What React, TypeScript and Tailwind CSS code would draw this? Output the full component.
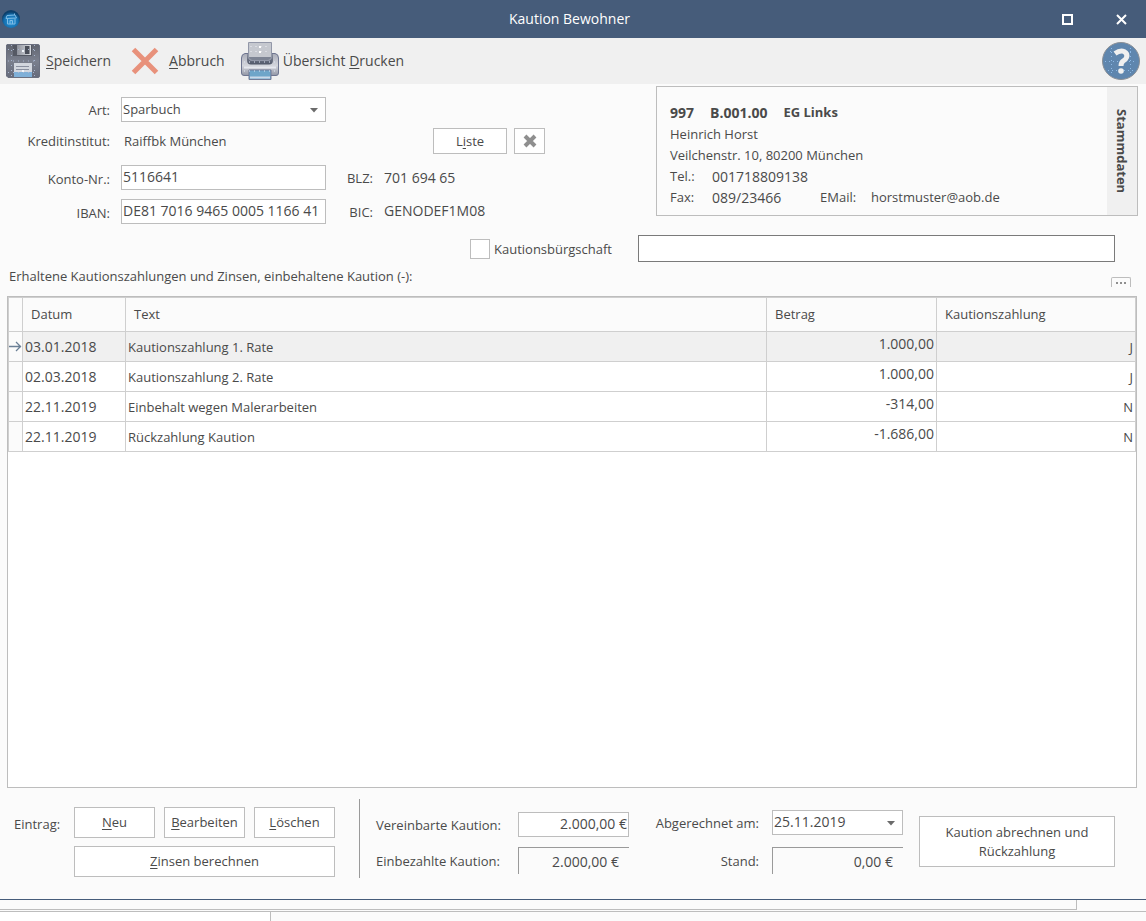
import React from "react";

const entries = [
  { date: "03.01.2018", text: "Kautionszahlung 1. Rate", amount: "1.000,00", flag: "J" },
  { date: "02.03.2018", text: "Kautionszahlung 2. Rate", amount: "1.000,00", flag: "J" },
  { date: "22.11.2019", text: "Einbehalt wegen Malerarbeiten", amount: "-314,00", flag: "N" },
  { date: "22.11.2019", text: "Rückzahlung Kaution", amount: "-1.686,00", flag: "N" },
];

const HouseIcon = () => (
  <svg width="18" height="18" viewBox="0 0 18 18" aria-hidden="true">
    <defs>
      <radialGradient id="globe" cx="0.5" cy="0.65" r="0.55">
        <stop offset="0" stopColor="#2f97d8" />
        <stop offset="0.7" stopColor="#1470b0" />
        <stop offset="1" stopColor="#0c3f6b" />
      </radialGradient>
    </defs>
    <circle cx="9" cy="9" r="9" fill="url(#globe)" />
    <path d="M4 8.5 L5 5.5 L13 5 L14.5 8 Z M12.5 5 V3.5 M5.5 8.5 V14 H13 V8.5 M8 14 V10.5 H10.5 V14" fill="none" stroke="#7fbde6" strokeWidth="1" />
  </svg>
);

const SaveIcon = () => (
  <svg width="34" height="34" viewBox="0 0 34 34" aria-hidden="true">
    <defs>
      <linearGradient id="disk" x1="0" y1="0" x2="0" y2="1">
        <stop offset="0" stopColor="#60646f" />
        <stop offset="0.5" stopColor="#7b808e" />
        <stop offset="1" stopColor="#666b7b" />
      </linearGradient>
      <linearGradient id="shutter" x1="0" y1="0" x2="1" y2="0">
        <stop offset="0" stopColor="#8f939d" />
        <stop offset="1" stopColor="#d9dce1" />
      </linearGradient>
    </defs>
    <path d="M1 0.5 H32 Q33.5 0.5 33.5 2 V32 Q33.5 33.5 32 33.5 H2 L0.5 32 V1 Z" fill="url(#disk)" stroke="#6b7080" />
    <path d="M7 1 H26 V12 H7 Z" fill="#555964" />
    <path d="M11 1 H25 V11 H11 Z" fill="url(#shutter)" />
    <path d="M19 2 H23.5 V10 H19 Z" fill="#4a4e59" />
    <path d="M8 19 H26 V33 H8 Z" fill="#d3d7df" />
    <path d="M8 28 H26 V33 H8 Z" fill="#7fb0d8" />
    <path d="M10 22.5 H23 M10 25.5 H23" stroke="#8a90a0" />
    <path d="M2 5.5 H32 M2 17 H32 M2 28.5 H32" stroke="#a9b6d0" strokeWidth="1" strokeDasharray="1 4" fill="none" />
    <path d="M5.5 1 V33 M28.5 1 V33" stroke="#a9b6d0" strokeWidth="1" strokeDasharray="1 4" fill="none" />
    <path d="M16 6 H18 V8 H16 Z M16 26 H18 V28 H16 Z" fill="#f2f6fc" />
  </svg>
);

const CancelIcon = () => (
  <svg width="28" height="28" viewBox="0 0 28 28" aria-hidden="true">
    <path d="M2.5 2.5 L25.5 25.5 M25.5 2.5 L2.5 25.5" stroke="#e8917b" strokeWidth="5" />
  </svg>
);

const PrinterIcon = () => (
  <svg width="38" height="38" viewBox="0 0 38 38" aria-hidden="true">
    <defs>
      <linearGradient id="body" x1="0" y1="0" x2="0" y2="1">
        <stop offset="0" stopColor="#a9acb8" />
        <stop offset="0.55" stopColor="#d3d5dc" />
        <stop offset="1" stopColor="#9296a5" />
      </linearGradient>
      <linearGradient id="slot" x1="0" y1="0" x2="0" y2="1">
        <stop offset="0" stopColor="#8a90a0" />
        <stop offset="1" stopColor="#4f5668" />
      </linearGradient>
    </defs>
    <path d="M4 11.5 H34 Q37.5 12 37.5 16 V31 Q37.5 33.5 35 33.5 H3 Q0.5 33.5 0.5 31 V16 Q0.5 12 4 11.5 Z" fill="url(#body)" stroke="#6e7590" />
    <path d="M7 8 H31 V12 H7 Z" fill="#f0f0f0" />
    <path d="M6 12 H32 V18 Q32 22.5 28 22.5 H10 Q6 22.5 6 18 Z" fill="url(#slot)" />
    <path d="M7.5 0.5 H30.5 V14 Q30.5 18.5 27 18.5 H11 Q7.5 18.5 7.5 14 Z" fill="#c5c8cf" stroke="#9297a8" />
    <path d="M8 15 H30 Q30 18 27 18 H11 Q8 18 8 15 Z" fill="#7d8494" />
    <path d="M3 25.5 H35" stroke="#e6e8ef" strokeWidth="2" />
    <path d="M8 28 H30 V37.5 H8 Z" fill="#6ea5c9" stroke="#727b97" />
    <path d="M9 35.5 H29" stroke="#cbd8e8" strokeWidth="2" />
    <path d="M9.5 4.5 H29 M9.5 9.5 H29" stroke="#eef0f7" strokeDasharray="1 4" />
    <path d="M3 20 H36 M3 29 H36" stroke="#e1e8f8" strokeDasharray="1 4" />
    <path d="M18 4 H20 V6 H18 Z M18 9 H20 V11 H18 Z" fill="#fff" />
  </svg>
);

const HelpIcon = () => (
  <svg width="38" height="38" viewBox="0 0 38 38" aria-hidden="true">
    <circle cx="19" cy="19" r="18.5" fill="#5f86ae" stroke="#8a8f96" />
    <path d="M8 9.5 H30 M3 19.5 H35 M6 28.5 H32" stroke="#8db9e6" strokeDasharray="1 3" fill="none" />
    <path d="M9.5 6 V32 M28.5 6 V32" stroke="#8db9e6" strokeDasharray="1 3" fill="none" />
    <path d="M13 11.5 Q18 8 22 9.5 Q26 11.5 24.5 15.5 Q24 17 21.5 18.8 Q19 20.5 19 24" fill="none" stroke="#f0f0f0" strokeWidth="5" />
    <circle cx="19" cy="29" r="2.8" fill="#f0f0f0" />
  </svg>
);

const Caret = () => (
  <svg className="pointer-events-none absolute right-2 top-1/2 -mt-0.5" width="8" height="5" viewBox="0 0 8 5" aria-hidden="true">
    <path d="M0 0 H8 L4 4.5 Z" fill="#6b6b6b" />
  </svg>
);

type DropdownProps = { id: string; value: string; className?: string };

const Dropdown = ({ id, value, className = "" }: DropdownProps) => (
  <div className={`relative ${className}`}>
    <select id={id} className="block h-[25px] w-full appearance-none border border-[#bdbdbd] bg-white pb-0.5 pl-px pr-5">
      <option>{value}</option>
    </select>
    <Caret />
  </div>
);

const field = "h-[25px] border border-[#bdbdbd] bg-white px-px pb-0.5 text-sm";
const button = "border border-[#bdbdbd] bg-white text-center";

const TitleBar = () => (
  <header className="flex h-[38px] items-center bg-[#465c7a] pl-0.5 text-sm text-white">
    <HouseIcon />
    <h1 className="flex-1 pl-[77px] text-center">Kaution Bewohner</h1>
    <div className="flex gap-1">
      <button aria-label="Maximieren" className="flex h-[38px] w-[50px] items-center justify-center">
        <svg width="11" height="11" viewBox="0 0 11 11" aria-hidden="true">
          <path d="M1 1 H10 V10 H1 Z" fill="none" stroke="#fff" strokeWidth="2" />
        </svg>
      </button>
      <button aria-label="Schließen" className="flex h-[38px] w-[50px] items-center justify-center">
        <svg width="11" height="11" viewBox="0 0 11 11" aria-hidden="true">
          <path d="M1 1 L10 10 M10 1 L1 10" stroke="#fff" strokeWidth="2" />
        </svg>
      </button>
    </div>
  </header>
);

const Toolbar = () => (
  <nav className="flex h-[46px] items-center bg-[#f0f0f0] px-1.5 text-sm">
    <button className="flex items-center gap-1.5">
      <SaveIcon />
      <span><u className="underline-offset-2">S</u>peichern</span>
    </button>
    <button className="ml-5 flex items-center gap-2.5">
      <CancelIcon />
      <span><u className="underline-offset-2">A</u>bbruch</span>
    </button>
    <button className="ml-4 flex items-center gap-1">
      <PrinterIcon />
      <span>Übersicht <u className="underline-offset-2">D</u>rucken</span>
    </button>
    <button aria-label="Hilfe" className="ml-auto">
      <HelpIcon />
    </button>
  </nav>
);

const AccountForm = () => (
  <div className="grid flex-1 grid-cols-[110px_205px_36px_minmax(0,1fr)] content-start items-center gap-x-[11px] pt-[13px]">
    <label htmlFor="art" className="text-right">Art:</label>
    <Dropdown id="art" value="Sparbuch" />
    <span className="col-span-2" />

    <span className="mt-1.5 text-right">Kreditinstitut:</span>
    <span className="mt-1.5 pl-[3px]">Raiffbk München</span>
    <div className="col-span-2 mt-1.5 flex gap-[7px] pl-24">
      <button className={`${button} h-[26px] w-[74px]`}>L<u className="underline-offset-2">i</u>ste</button>
      <button aria-label="Kreditinstitut entfernen" className={`${button} flex h-[26px] w-[31px] items-center justify-center`}>
        <svg width="14" height="14" viewBox="0 0 14 14" aria-hidden="true">
          <path d="M2 2 L12 12 M12 2 L2 12" stroke="#8f8f8f" strokeWidth="4" />
        </svg>
      </button>
    </div>

    <label htmlFor="konto" className="mt-[11px] pt-0.5 text-right">Konto-Nr.:</label>
    <input id="konto" defaultValue="5116641" className={`${field} mt-[11px]`} />
    <span className="mt-[11px] text-right">BLZ:</span>
    <span className="mt-[11px] text-sm">701 694 65</span>

    <label htmlFor="iban" className="mt-[9px] pt-0.5 text-right">IBAN:</label>
    <input id="iban" defaultValue="DE81 7016 9465 0005 1166 41" className={`${field} mt-[9px]`} />
    <span className="mt-[9px] text-right">BIC:</span>
    <span className="mt-[9px] pb-0.5 text-sm">GENODEF1M08</span>
  </div>
);

const MasterData = () => (
  <aside className="mr-2 mt-0.5 flex h-[130px] w-[482px] shrink-0 border border-[#bdbdbd]">
    <div className="flex-1 pl-[13px] pt-[15px] leading-[21px]">
      <p className="mb-px flex gap-4 font-bold">
        <span className="text-sm leading-[21px]">997</span>
        <span className="text-sm leading-[21px]">B.001.00</span>
        <span>EG Links</span>
      </p>
      <p>Heinrich Horst</p>
      <p>Veilchenstr. 10, 80200 München</p>
      <div className="grid grid-cols-[42px_108px_51px_1fr]">
        <span>Tel.:</span>
        <span className="col-span-3 text-sm leading-[21px]">001718809138</span>
        <span>Fax:</span>
        <span className="text-sm leading-[21px]">089/23466</span>
        <span>EMail:</span>
        <span>horstmuster@aob.de</span>
      </div>
    </div>
    <button className="w-[30px] bg-[#f0f0f0] text-center font-bold [writing-mode:vertical-rl]">Stammdaten</button>
  </aside>
);

const EntryTable = () => (
  <div className="ml-[7px] mr-[9px] flex-1 border border-[#bdbdbd] bg-white">
    <table className="w-full table-fixed border-separate border-spacing-0 border-l border-t border-[#cfcfcf]">
      <colgroup>
        <col className="w-[14px]" />
        <col className="w-[103px]" />
        <col />
        <col className="w-[170px]" />
        <col className="w-[199px]" />
      </colgroup>
      <thead>
        <tr className="h-[34px] bg-[#fbfbfb] text-left [&>th]:border-b [&>th]:border-r [&>th]:border-[#cfcfcf] [&>th]:px-2 [&>th]:pb-0.5 [&>th]:font-normal">
          <th className="!px-0" aria-label="Auswahl" />
          <th>Datum</th>
          <th>Text</th>
          <th>Betrag</th>
          <th>Kautionszahlung</th>
        </tr>
      </thead>
      <tbody>
        {entries.map((entry, i) => (
          <tr
            key={i}
            className="h-[30px] first:bg-[#f0f0f0] [&>td]:border-b [&>td]:border-r [&>td]:border-[#cfcfcf] [&>td]:px-0.5 [&>td]:py-0"
          >
            <td className="bg-[#fbfbfb] !px-0">
              {i === 0 && (
                <svg width="13" height="11" viewBox="0 0 13 11" aria-hidden="true">
                  <path d="M0 5.5 H12 M7 1 L11.5 5.5 L7 10" fill="none" stroke="#6b8096" strokeWidth="1.3" />
                </svg>
              )}
            </td>
            <td className="text-sm">{entry.date}</td>
            <td>{entry.text}</td>
            <td className="text-right align-top text-sm leading-6">{entry.amount}</td>
            <td className="text-right">{entry.flag}</td>
          </tr>
        ))}
      </tbody>
    </table>
  </div>
);

const sunken = "block h-[27px] border-l border-t border-[#9a9a9a] pr-2.5 text-right text-sm leading-7";
const action = `${button} h-[31px] pb-0.5`;

const Footer = () => (
  <footer className="flex pb-[21px] pl-3.5 pt-[11px]">
    <span className="w-[60px] pt-[15px]">Eintrag:</span>
    <div className="grid w-[261px] grid-cols-3 content-start gap-x-[9px] gap-y-2 pt-2">
      <button className={action}><u className="underline-offset-2">N</u>eu</button>
      <button className={action}><u className="underline-offset-2">B</u>earbeiten</button>
      <button className={action}><u className="underline-offset-2">L</u>öschen</button>
      <button className={`${action} col-span-3`}><u className="underline-offset-2">Z</u>insen berechnen</button>
    </div>
    <div className="ml-6 h-[79px] border-l border-[#9a9a9a]" />
    <div className="ml-4 grid grid-cols-[142px_111px] content-start items-center gap-y-[10px] pt-[13px]">
      <label htmlFor="vereinbart">Vereinbarte Kaution:</label>
      <input id="vereinbart" defaultValue="2.000,00 €" className={`${field} w-full text-right`} />
      <label htmlFor="einbezahlt">Einbezahlte Kaution:</label>
      <output id="einbezahlt" className={sunken}>2.000,00 €</output>
    </div>
    <div className="ml-6 grid grid-cols-[106px_131px] content-start items-center gap-x-[13px] gap-y-3 pt-[11px]">
      <label htmlFor="abgerechnet" className="text-right">Abgerechnet am:</label>
      <Dropdown id="abgerechnet" value="25.11.2019" className="text-sm" />
      <label htmlFor="stand" className="text-right">Stand:</label>
      <output id="stand" className={sunken}>0,00 €</output>
    </div>
    <button className={`${button} ml-4 mt-[17px] h-[51px] w-[196px] px-5 leading-[19px]`}>
      Kaution abrechnen und Rückzahlung
    </button>
  </footer>
);

const App = () => {
  return (
    <main className="flex min-h-screen flex-col bg-[#fbfbfb] font-['Open_Sans','Noto_Sans',sans-serif] text-[13px] leading-5 text-[#4a4a4a]">
      <TitleBar />
      <Toolbar />
      <section className="flex">
        <AccountForm />
        <MasterData />
      </section>
      <div className="mt-[11px] flex h-[27px] items-center justify-end pl-[470px] pr-[31px] pt-0">
        <label className="flex w-[168px] shrink-0 items-center gap-1">
          <input type="checkbox" className="size-5 appearance-none border border-[#bdbdbd] bg-white" />
          Kautionsbürgschaft
        </label>
        <input aria-label="Kautionsbürgschaft Text" className="h-[27px] min-w-0 flex-1 border border-[#7a7a7a] bg-white px-1" />
      </div>
      <div className="mb-[9px] flex h-[25px] items-end justify-between pl-[9px] pr-[15px]">
        <h2 className="pb-px">Erhaltene Kautionszahlungen und Zinsen, einbehaltene Kaution (-):</h2>
        <button aria-label="Mehr" className="flex h-[10px] w-5 items-center justify-center rounded-t-xs border border-b-0 border-[#bdbdbd]">
          <svg width="10" height="2" viewBox="0 0 10 2" aria-hidden="true">
            <path d="M0 1 H2 M4 1 H6 M8 1 H10" stroke="#8f8f8f" strokeWidth="2" />
          </svg>
        </button>
      </div>
      <EntryTable />
      <Footer />
      <div className="border-t border-[#465c7a]">
        <div className="mr-[69px] h-[10px] border-b border-r border-[#bdbdbd]" />
      </div>
      <div className="mt-px h-[10px] border-t border-[#bdbdbd]">
        <div className="h-full w-[271px] border-r border-[#bdbdbd] bg-white" />
      </div>
    </main>
  );
};

export default App;
